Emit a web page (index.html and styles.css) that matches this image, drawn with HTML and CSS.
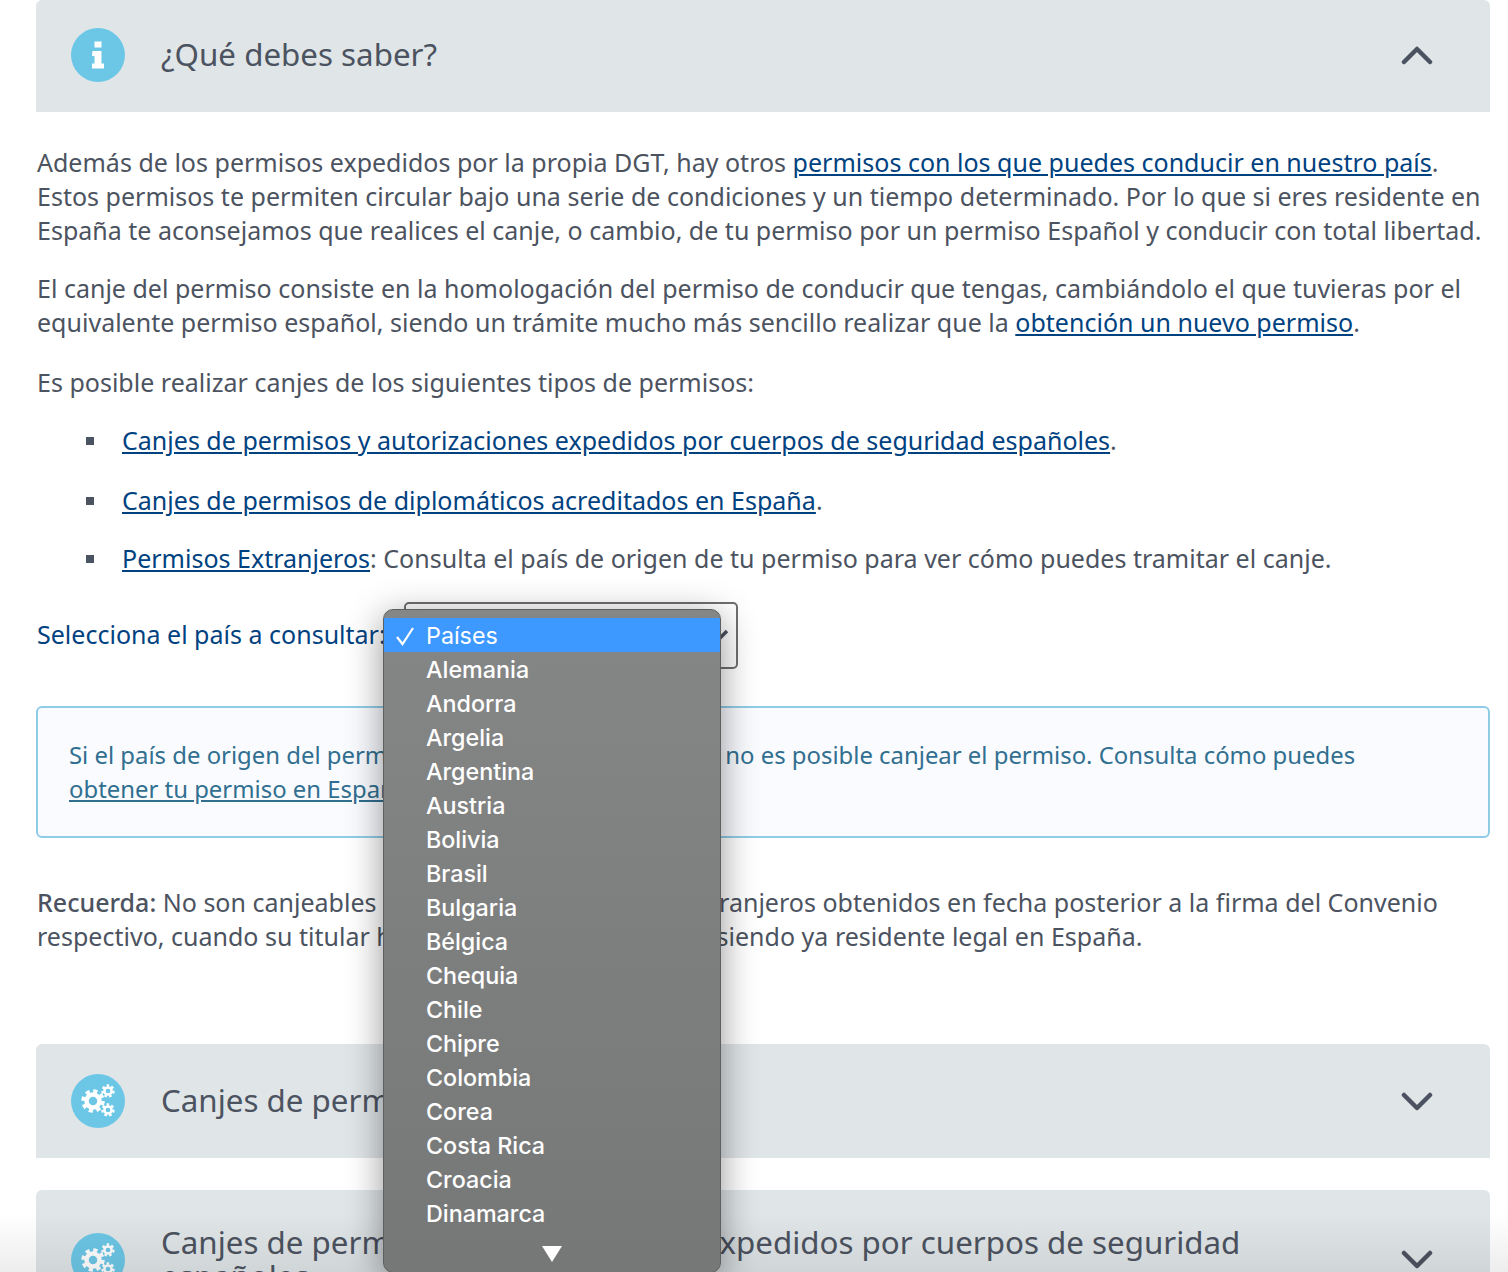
FILE: index.html
```html
<!DOCTYPE html>
<html lang="es">
<head>
<meta charset="utf-8">
<title>¿Qué debes saber?</title>
<link rel="stylesheet" href="styles.css">
</head>
<body>
<main class="page">
  <section class="acc-head acc-first">
    <span class="acc-icon">
      <svg viewBox="0 0 54 54" width="54" height="54"><path fill="#fff" d="M23.500 13.500h7v6h-7zM21.500 23h9v12.500h2.500v5h-12v-5h2.500v-7.500h-2.500z"/></svg>
    </span>
    <h2 class="acc-title">¿Qué debes saber?</h2>
    <svg class="acc-chev" viewBox="0 0 32 20" width="32" height="20"><path d="M3 17 16 4l13 13"/></svg>
  </section>

  <div class="content">
    <p class="p-first">Además de los permisos expedidos por la propia DGT, hay otros <a href="#">permisos con los que puedes conducir en nuestro país</a>. Estos permisos te permiten circular bajo una serie de condiciones y un tiempo determinado. Por lo que si eres residente en España te aconsejamos que realices el canje, o cambio, de tu permiso por un permiso Español y conducir con total libertad.</p>
    <p class="p-second">El canje del permiso consiste en la homologación del permiso de conducir que tengas, cambiándolo el que tuvieras por el equivalente permiso español, siendo un trámite mucho más sencillo realizar que la <a href="#">obtención un nuevo permiso</a>.</p>
    <p class="p-third">Es posible realizar canjes de los siguientes tipos de permisos:</p>
    <ul class="list">
      <li class="li-a"><a href="#">Canjes de permisos y autorizaciones expedidos por cuerpos de seguridad españoles</a>.</li>
      <li class="li-b"><a href="#">Canjes de permisos de diplomáticos acreditados en España</a>.</li>
      <li class="li-c"><a href="#">Permisos Extranjeros</a>: Consulta el país de origen de tu permiso para ver cómo puedes tramitar el canje.</li>
    </ul>
    <div class="country">
      <label class="country-label">Selecciona el país a consultar:</label>
      <div class="select-box">
        <svg class="select-chev" viewBox="0 0 20 12" width="20" height="12"><path d="M2 2l8 8 8-8"/></svg>
      </div>
    </div>
    <div class="alert">Si el país de origen del permiso no aparece en este listado no es posible canjear el permiso. Consulta cómo puedes<br><a href="#">obtener tu permiso en España</a>.</div>
    <p class="remember"><b>Recuerda:</b> No son canjeables los permisos de conducir extranjeros obtenidos en fecha posterior a la firma del Convenio respectivo, cuando su titular hubiera obtenido el permiso siendo ya residente legal en España.</p>
  </div>

  <section class="acc-head acc-second">
    <span class="acc-icon">
      <svg viewBox="0 0 54 54" width="54" height="54">
        <g fill="none" stroke="#fff">
          <circle cx="22" cy="27" r="6.500" stroke-width="4.500"/>
          <circle cx="22" cy="27" r="10" stroke-width="3.500" stroke-dasharray="4.200 3.650"/>
          <circle cx="37" cy="17" r="3.600" stroke-width="2.500"/>
          <circle cx="37" cy="17" r="5.600" stroke-width="2.200" stroke-dasharray="2.600 2.260"/>
          <circle cx="37" cy="36" r="3.600" stroke-width="2.500"/>
          <circle cx="37" cy="36" r="5.600" stroke-width="2.200" stroke-dasharray="2.600 2.260"/>
        </g>
      </svg>
    </span>
    <h2 class="acc-title">Canjes de permisos</h2>
    <svg class="acc-chev" viewBox="0 0 32 20" width="32" height="20"><path d="M3 3l13 13L29 3"/></svg>
  </section>

  <section class="acc-head acc-third">
    <span class="acc-icon">
      <svg viewBox="0 0 54 54" width="54" height="54">
        <g fill="none" stroke="#fff">
          <circle cx="22" cy="27" r="6.500" stroke-width="4.500"/>
          <circle cx="22" cy="27" r="10" stroke-width="3.500" stroke-dasharray="4.200 3.650"/>
          <circle cx="37" cy="17" r="3.600" stroke-width="2.500"/>
          <circle cx="37" cy="17" r="5.600" stroke-width="2.200" stroke-dasharray="2.600 2.260"/>
          <circle cx="37" cy="36" r="3.600" stroke-width="2.500"/>
          <circle cx="37" cy="36" r="5.600" stroke-width="2.200" stroke-dasharray="2.600 2.260"/>
        </g>
      </svg>
    </span>
    <h2 class="acc-title">Canjes de permisos y autorizaciones expedidos por cuerpos de seguridad españoles</h2>
    <svg class="acc-chev" viewBox="0 0 32 20" width="32" height="20"><path d="M3 3l13 13L29 3"/></svg>
  </section>
</main>

<div class="fade"></div>

<div class="popup">
  <div class="opt opt-selected">
    <svg class="check" viewBox="0 0 20 20" width="20" height="20"><path d="M2 11l5.500 7L18 2"/></svg>Países
  </div>
  <div class="opt">Alemania</div>
  <div class="opt">Andorra</div>
  <div class="opt">Argelia</div>
  <div class="opt">Argentina</div>
  <div class="opt">Austria</div>
  <div class="opt">Bolivia</div>
  <div class="opt">Brasil</div>
  <div class="opt">Bulgaria</div>
  <div class="opt">Bélgica</div>
  <div class="opt">Chequia</div>
  <div class="opt">Chile</div>
  <div class="opt">Chipre</div>
  <div class="opt">Colombia</div>
  <div class="opt">Corea</div>
  <div class="opt">Costa Rica</div>
  <div class="opt">Croacia</div>
  <div class="opt">Dinamarca</div>
  <div class="scroll-down"></div>
</div>
</body>
</html>
```

FILE: styles.css
```css
* { box-sizing: border-box; }
html, body { margin: 0; height: 1272px; overflow: hidden; background: #fff; }
body { position: relative; font-family: "Noto Sans", "Open Sans", sans-serif; font-size: 25px; line-height: 34px; letter-spacing: .01px; color: #4c5360; }
.page { width: 1490px; padding-left: 36px; }
a { color: #00427f; text-decoration: underline; }

.acc-head { display: flex; align-items: center; background: #e0e5e8; padding: 0 57px 0 35px; border-radius: 6px 6px 0 0; }
.acc-first { height: 112px; padding-bottom: 2px; }
.acc-second { height: 114px; margin-top: 91px; }
.acc-second .acc-chev { margin-top: 2px; }
.acc-third { height: 114px; margin-top: 32px; align-items: flex-start; padding-top: 35px; }
.acc-third .acc-icon { margin-top: 8px; }
.acc-third .acc-chev { margin-top: 25px; }
.acc-icon { flex: none; width: 54px; height: 54px; border-radius: 50%; background: #6cc7e6; display: block; }
.acc-icon svg { display: block; }
.acc-title { flex: 1; margin: 0 0 0 36px; padding-bottom: 2px; font-size: 31.300px; line-height: 34px; font-weight: 400; letter-spacing: 0; color: #4c5360; }
.acc-chev { flex: none; margin-left: 40px; fill: none; stroke: #4c5360; stroke-width: 4.500; stroke-linecap: round; stroke-linejoin: round; }

.content { padding: 33px 0 0; }
p { margin: 0; padding-left: 1px; }
.p-second { margin-top: 24px; }
.p-third { margin-top: 26px; }
.list { list-style: none; margin: 24px 0 0; padding: 0 0 0 86px; }
.list li { position: relative; }
.list li::before { content: ""; position: absolute; left: -36px; top: 14px; width: 8px; height: 8px; background: #4c5360; }
.list .li-b { margin-top: 26px; }
.list .li-c { margin-top: 24px; }

.country { display: flex; align-items: center; margin-top: 27px; height: 67px; }
.country-label { color: #00427f; width: 368px; flex: none; padding: 0 0 3px 1px; }
.select-box { width: 334px; height: 67px; border: 2px solid #6f6f6f; border-radius: 5px; background: #fff; position: relative; }
.select-chev { position: absolute; right: 7px; top: 25px; fill: none; stroke: #4c5360; stroke-width: 3.500; }

.alert { margin-top: 37px; height: 132px; border: 2px solid #8fcde6; border-radius: 6px; background: #f9fbfe; padding: 30px 30px 0 31px; color: #316f90; font-size: 23.900px; letter-spacing: 0; }
.alert a { color: #316f90; }
.remember { margin-top: 47px; }
.remember b { font-weight: 500; }

.fade { position: absolute; left: 0; right: 0; bottom: 0; height: 60px; background: linear-gradient(to bottom, rgba(0,0,0,0), rgba(0,0,0,.07)); }

.popup { position: absolute; left: 383px; top: 609px; width: 338px; height: 664px; padding-top: 8px; border: 1px solid #5e6060; border-radius: 10px; background: linear-gradient(to bottom, #858686, #767878); box-shadow: 0 8px 36px rgba(0,0,0,.42); font-family: "Inter", "Liberation Sans", sans-serif; font-size: 23.300px; line-height: 34px; font-weight: 500; letter-spacing: 0; color: #fff; }
.opt { height: 34px; padding: 1px 0 0 42px; position: relative; }
.opt-selected { background: #3d98ff; font-weight: 400; }
.check { position: absolute; left: 11px; top: 8px; fill: none; stroke: #fff; stroke-width: 2.200; }
.scroll-down { position: absolute; left: 158px; top: 636px; width: 0; height: 0; border-left: 10px solid transparent; border-right: 10px solid transparent; border-top: 16px solid #fff; }
```
